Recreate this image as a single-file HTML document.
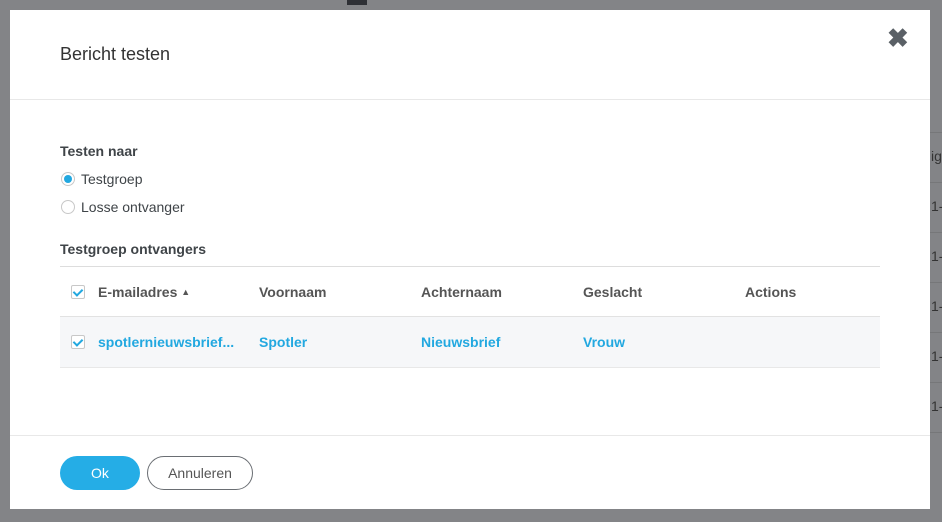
<!DOCTYPE html><html><head><style>
body{margin:0;width:942px;height:522px;background:#838487;position:relative;overflow:hidden;font-family:"Liberation Sans",sans-serif}
.m{position:absolute;left:10px;top:10px;width:920px;height:499px;background:#fff}
.t{position:absolute;color:#3f4448}
.hl{position:absolute;left:0;width:920px;height:1px;background:#e8e8e8}
.cb{position:absolute;width:12px;height:12px;border:1px solid #c8c8c8;border-radius:2px;background:#fff}
.cb:after{content:"";position:absolute;left:3px;top:1px;width:4px;height:7px;border:solid #22a8e0;border-width:0 2px 2px 0;transform:rotate(45deg)}
.bl{color:#22a8e0;font-weight:bold}
.bg{position:absolute;color:#333;font-size:14px}
.rl{position:absolute;left:930px;width:12px;height:1px;background:#767779}
</style></head><body>
<div class="rl" style="top:132px"></div>
<div class="rl" style="top:182px"></div>
<div class="rl" style="top:232px"></div>
<div class="rl" style="top:282px"></div>
<div class="rl" style="top:332px"></div>
<div class="rl" style="top:382px"></div>
<div class="rl" style="top:432px"></div>
<div class="bg" style="left:931px;top:148px">ig</div>
<div class="bg" style="left:931px;top:198px">1-</div>
<div class="bg" style="left:931px;top:248px">1-</div>
<div class="bg" style="left:931px;top:298px">1-</div>
<div class="bg" style="left:931px;top:348px">1-</div>
<div class="bg" style="left:931px;top:398px">1-</div>
<div style="position:absolute;left:347px;top:0;width:20px;height:5px;background:#2e3035"></div>
<div class="m">
<div class="t" style="left:50px;top:34px;font-size:18px;color:#333">Bericht testen</div>
<div class="t" style="left:877px;top:13px;font-size:26px;font-weight:bold;color:#5a6066">✖</div>
<div class="hl" style="top:89px"></div>
<div class="t" style="left:50px;top:133px;font-size:14px;font-weight:bold">Testen naar</div>
<div style="position:absolute;left:51px;top:162px;width:12px;height:12px;border:1px solid #c8c8c8;border-radius:50%"><div style="margin:2px;width:8px;height:8px;border-radius:50%;background:#22a8e0"></div></div>
<div class="t" style="left:71px;top:161px;font-size:14px">Testgroep</div>
<div style="position:absolute;left:51px;top:190px;width:12px;height:12px;border:1px solid #c8c8c8;border-radius:50%"></div>
<div class="t" style="left:71px;top:189px;font-size:14px">Losse ontvanger</div>
<div class="t" style="left:50px;top:231px;font-size:14px;font-weight:bold">Testgroep ontvangers</div>
<div style="position:absolute;left:50px;top:256px;width:820px;height:1px;background:#ddd"></div>
<div class="cb" style="left:61px;top:275px"></div>
<div class="t" style="left:88px;top:274px;font-size:14px;font-weight:bold;color:#555">E-mailadres <span style="font-size:9px;vertical-align:2px">▲</span></div>
<div class="t" style="left:249px;top:274px;font-size:14px;font-weight:bold;color:#555">Voornaam</div>
<div class="t" style="left:411px;top:274px;font-size:14px;font-weight:bold;color:#555">Achternaam</div>
<div class="t" style="left:573px;top:274px;font-size:14px;font-weight:bold;color:#555">Geslacht</div>
<div class="t" style="left:735px;top:274px;font-size:14px;font-weight:bold;color:#555">Actions</div>
<div style="position:absolute;left:50px;top:306px;width:820px;height:50px;background:#f6f7f9;border-top:1px solid #e2e2e2;border-bottom:1px solid #e8e8e8"></div>
<div class="cb" style="left:61px;top:325px"></div>
<div class="t bl" style="left:88px;top:324px;font-size:14px">spotlernieuwsbrief...</div>
<div class="t bl" style="left:249px;top:324px;font-size:14px">Spotler</div>
<div class="t bl" style="left:411px;top:324px;font-size:14px">Nieuwsbrief</div>
<div class="t bl" style="left:573px;top:324px;font-size:14px">Vrouw</div>
<div class="hl" style="top:425px"></div>
<div style="position:absolute;left:50px;top:446px;width:80px;height:34px;border-radius:17px;background:#25ade6;color:#fff;font-size:14px;line-height:34px;text-align:center">Ok</div>
<div style="position:absolute;left:137px;top:446px;width:104px;height:32px;border-radius:17px;border:1px solid #6a6e73;color:#555;font-size:14px;line-height:32px;text-align:center">Annuleren</div>
</div>
</body></html>
